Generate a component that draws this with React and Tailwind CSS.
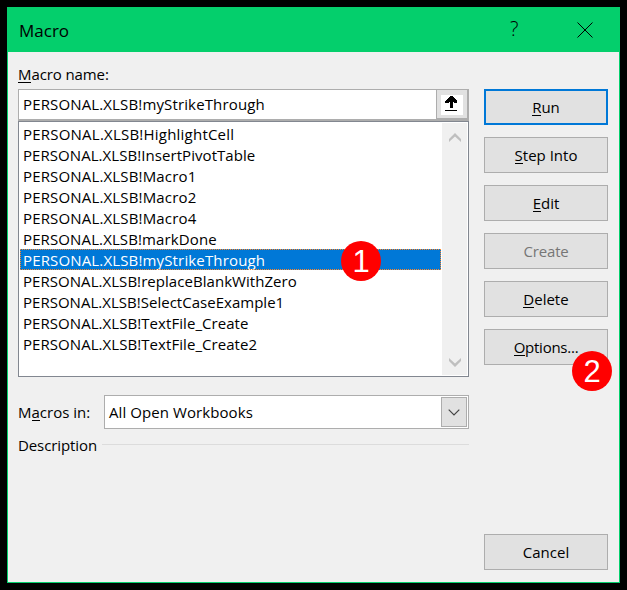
const macros = [
  ["HighlightCell", "tracking-[0.22px]"],
  ["InsertPivotTable", "tracking-[0.06px]"],
  ["Macro1", "tracking-[0.16px]"],
  ["Macro2", "tracking-[0.16px]"],
  ["Macro4", "tracking-[0.16px]"],
  ["markDone", "tracking-[0.12px]"],
  ["myStrikeThrough", "tracking-[0.15px]"],
  ["replaceBlankWithZero", "tracking-[0.05px]"],
  ["SelectCaseExample1", "tracking-[0.02px]"],
  ["TextFile_Create", "tracking-[0.06px]"],
  ["TextFile_Create2", "tracking-[0.06px]"],
];

function Key({ children }) {
  return <span className="border-b border-current inline-block h-[17px] leading-[17px]">{children}</span>;
}

function Button({ children, className = "border border-[#adadad] text-black" }) {
  return (
    <button className={`flex h-9 w-[124px] shrink-0 items-center justify-center bg-[#e1e1e1] ${className}`}>
      <span>{children}</span>
    </button>
  );
}

function Badge({ children, className }) {
  return (
    <div className={`absolute flex size-10 items-center justify-center rounded-full bg-[#ff0000] font-['Liberation_Sans',sans-serif] text-[31px] leading-none text-white ${className}`}>
      {children}
    </div>
  );
}

export default function App() {
  return (
    <div className="relative h-[590px] w-[627px] overflow-hidden bg-black pt-[7px] pl-[7px] font-['Open_Sans','Noto_Sans',sans-serif] text-[15px] leading-[21px] text-black">
      <div className="flex h-[576px] w-[613px] flex-col border border-[#04cf6c] bg-[#f0f0f0]">
        <header className="flex h-11 shrink-0 items-center bg-[#04cf6c] pl-[11px]">
          <h1 className="flex-1 text-[17px]">Macro</h1>
          <span className="w-[68px] pb-[2px] pl-[1px] text-[20px]/[24px] font-light">?</span>
          <svg className="mr-[26px] size-4" viewBox="0 0 16 16" fill="none" stroke="black" strokeWidth="1">
            <path d="M.5.5l15 15M15.5.5l-15 15" />
          </svg>
        </header>
        <div className="flex flex-1 justify-between pr-[11px] pl-[10px]">
          <main className="flex w-[451px] flex-col">
            <label className="flex h-[37px] items-center pt-2 tracking-[-0.1px]"><span><Key>M</Key>acro name:</span></label>
            <div className="flex h-8 border border-b-2 border-[#adadad] bg-white">
              <span className="flex-1 self-center pl-1 tracking-[0.14px]">PERSONAL.XLSB!myStrikeThrough</span>
              <div className="-mr-px -mb-px flex w-[33px] justify-center border border-t-0 border-r-2 border-b-2 border-[#adadad] bg-[#e1e1e1] pt-[5px]">
                <svg className="mr-px" width="22" height="20" viewBox="0 0 22 20" shapeRendering="crispEdges">
                  <path fill="white" d="M0 0h22v20H0z" />
                  <path d="M9 1h3v1h1v1h1v1h1v1h1v3h-3V7h-1v6H9V7H8v1H4V6h1V5h1V4h1V3h1V2h1zM4 15h12v1H4z" />
                </svg>
              </div>
            </div>
            <div className="flex h-64 border border-[#828790] bg-white p-px">
              <ul className="flex-1">
                {macros.map(([name, spacing]) => (
                  <li
                    key={name}
                    className={`h-[21px] pl-[3px] leading-[23px] whitespace-nowrap ${spacing} ${name === "myStrikeThrough" ? "bg-[#0078d7] text-white outline-1 -outline-offset-1 outline-dotted outline-[#ff8728]" : ""}`}
                  >
                    PERSONAL.XLSB!{name}
                  </li>
                ))}
              </ul>
              <div className="ml-px flex w-[25px] flex-col items-center justify-between bg-[#f0f0f0] pt-[10px] pb-2">
                <svg width="12" height="9" viewBox="0 0 12 9" fill="#bfbfbf"><path d="M6 0l6 6v3L6 3.5 0 9V6z" /></svg>
                <svg width="12" height="9" viewBox="0 0 12 9" fill="#bfbfbf"><path d="M6 9l6-6V0L6 5.5 0 0v3z" /></svg>
              </div>
            </div>
            <div className="mt-[18px] flex h-[34px] items-center">
              <span className="w-[86px]">M<Key>a</Key>cros in:</span>
              <div className="flex h-full flex-1 items-center border border-[#adadad] bg-white p-px">
                <span className="flex-1 pl-[3px] tracking-[0.08px]">All Open Workbooks</span>
                <div className="flex h-[30px] w-[26px] items-center justify-center border border-[#adadad] bg-[#e1e1e1]">
                  <svg width="12" height="7" viewBox="0 0 12 7" fill="none" stroke="#444" strokeWidth="1.2"><path d="M.7.7L6 6 11.3.7" /></svg>
                </div>
              </div>
            </div>
            <div className="mt-[5px] flex h-[22px] items-center">
              <span className="w-[84px] tracking-[-0.1px]">Description</span>
              <div className="mb-[2px] h-px flex-1 bg-[#dcdcdc]" />
            </div>
          </main>
          <aside className="flex w-[124px] flex-col gap-3 pt-[37px] pb-3">
            <Button className="border-2 border-[#0078d7]"><Key>R</Key>un</Button>
            <Button className="border border-[#adadad]"><Key>S</Key>tep Into</Button>
            <Button><Key>E</Key>dit</Button>
            <Button className="border border-[#adadad] tracking-[-0.15px] text-[#767676]">Create</Button>
            <Button><Key>D</Key>elete</Button>
            <Button className="border border-[#adadad] tracking-[-0.25px]"><Key>O</Key>ptions...</Button>
            <div className="mt-auto"><Button>Cancel</Button></div>
          </aside>
        </div>
      </div>
      <Badge className="top-[241px] left-[341px]">1</Badge>
      <Badge className="top-[351px] left-[572px]">2</Badge>
    </div>
  );
}
